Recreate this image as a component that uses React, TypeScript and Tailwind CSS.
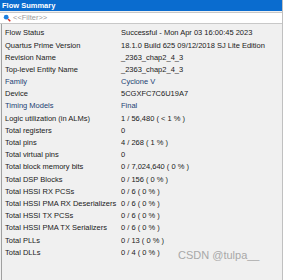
const rows: { label: string; value: string; blue?: boolean }[] = [
  { label: "Flow Status", value: "Successful - Mon Apr 03 16:00:45 2023" },
  { label: "Quartus Prime Version", value: "18.1.0 Build 625 09/12/2018 SJ Lite Edition" },
  { label: "Revision Name", value: "_2363_chap2_4_3" },
  { label: "Top-level Entity Name", value: "_2363_chap2_4_3" },
  { label: "Family", value: "Cyclone V", blue: true },
  { label: "Device", value: "5CGXFC7C6U19A7" },
  { label: "Timing Models", value: "Final", blue: true },
  { label: "Logic utilization (in ALMs)", value: "1 / 56,480 ( < 1 % )" },
  { label: "Total registers", value: "0" },
  { label: "Total pins", value: "4 / 268 ( 1 % )" },
  { label: "Total virtual pins", value: "0" },
  { label: "Total block memory bits", value: "0 / 7,024,640 ( 0 % )" },
  { label: "Total DSP Blocks", value: "0 / 156 ( 0 % )" },
  { label: "Total HSSI RX PCSs", value: "0 / 6 ( 0 % )" },
  { label: "Total HSSI PMA RX Deserializers", value: "0 / 6 ( 0 % )" },
  { label: "Total HSSI TX PCSs", value: "0 / 6 ( 0 % )" },
  { label: "Total HSSI PMA TX Serializers", value: "0 / 6 ( 0 % )" },
  { label: "Total PLLs", value: "0 / 13 ( 0 % )" },
  { label: "Total DLLs", value: "0 / 4 ( 0 % )" },
];

export default function App() {
  return (
    <div className="relative w-[283px] h-[280px] overflow-hidden bg-[#f0f0f0] font-['Liberation_Sans',sans-serif] text-[7.5px]">
      {/* Header */}
      <div className="h-[11px] bg-[#0a6ccf] text-white font-bold pl-[2px] leading-[11px] text-[7.5px]">
        Flow Summary
      </div>

      {/* Filter */}
      <div className="mt-[1px] h-[12px] bg-white border-y border-[#c8c8c8] flex items-center pl-[3px] gap-[2px]">
        <svg width="8" height="8" viewBox="0 0 8 8">
          <circle cx="3.2" cy="3.2" r="2.4" fill="#1a7fe0" />
          <line x1="5" y1="5" x2="7.3" y2="7.3" stroke="#d0332a" strokeWidth="1.5" />
        </svg>
        <span className="text-[#9a9a9a] leading-none">&lt;&lt;Filter&gt;&gt;</span>
      </div>

      {/* Table */}
      <div className="border-l border-[#a0a0a0] ml-[1px] h-full pt-[3px]">
        {rows.map((r) => (
          <div
            key={r.label}
            className={`flex h-[12.2px] items-center leading-none ${r.blue ? "text-[#1c3f73]" : "text-[#1a1a1a]"}`}
          >
            <span className="w-[119px] pl-[3px] shrink-0 whitespace-nowrap">{r.label}</span>
            <span className="whitespace-nowrap">{r.value}</span>
          </div>
        ))}
      </div>

      <div className="absolute right-0 top-0 h-full w-[1px] bg-[#c0c0c0]" />

      <div className="absolute left-[178px] top-[247px] text-[11px] text-[#a8a8a8]">
        CSDN @tulpa__
      </div>
    </div>
  );
}
